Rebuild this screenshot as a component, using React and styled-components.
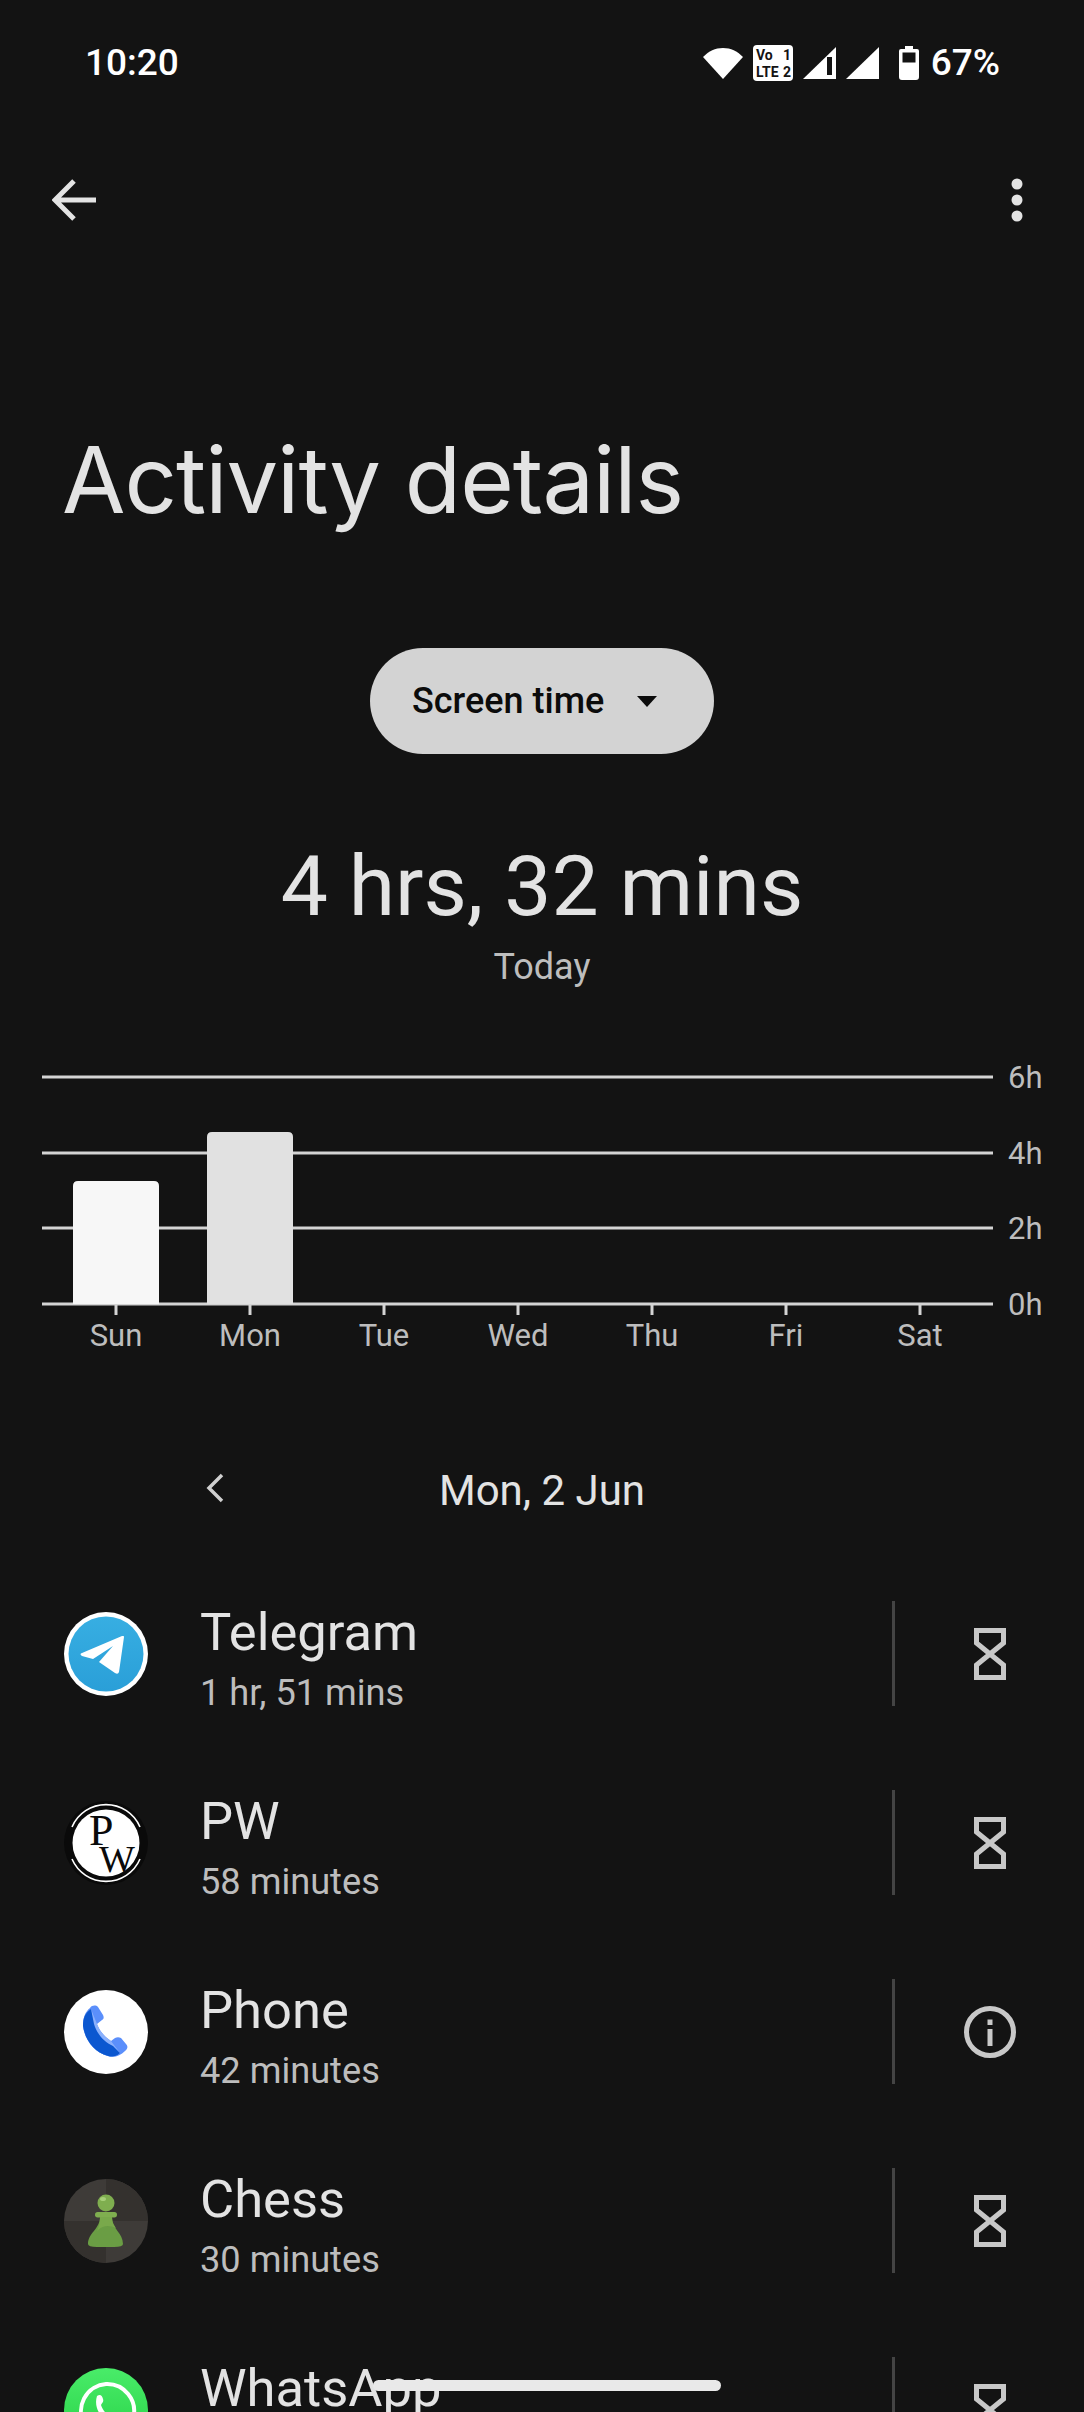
import React from 'react';
import styled, { createGlobalStyle } from 'styled-components';

const Global = createGlobalStyle`
  html, body { margin: 0; padding: 0; background: #131313; }
  * { box-sizing: border-box; }
`;

const Page = styled.div`
  width: 1084px;
  height: 2412px;
  overflow: hidden;
  position: relative;
  background: #131313;
  font-family: Roboto, "Liberation Sans", sans-serif;
  color: #e3e3e3;
  display: flex;
  flex-direction: column;
`;
const StatusBar = styled.div`
  height: 124px;
  flex: none;
  padding: 1px 84px 0 85px;
  display: flex;
  align-items: center;
  justify-content: space-between;
  color: #fff;
`;
const Clock = styled.span`
  font-size: 37px;
  font-weight: 500;
`;
const StatusIcons = styled.div`
  display: flex;
  align-items: center;
  gap: 10px;
`;
const BatterySlot = styled.svg`
  margin-left: 10px;
`;
const Pct = styled.span`
  font-size: 37px;
  font-weight: 500;
  margin-left: 2px;
`;
const Toolbar = styled.div`
  height: 152px;
  flex: none;
  padding: 0 61px 0 52px;
  display: flex;
  align-items: center;
  justify-content: space-between;
`;
const Title = styled.h1`
  margin: 0;
  height: 372px;
  flex: none;
  padding: 144px 0 0 62px;
  font-family: Inter, sans-serif;
  font-weight: 400;
  font-size: 92px;
  line-height: 120px;
  letter-spacing: -1px;
  color: #e3e3e3;
`;
const PillRow = styled.div`
  display: flex;
  justify-content: center;
  flex: none;
`;
const Pill = styled.div`
  width: 344px;
  height: 106px;
  border-radius: 53px;
  background: #d3d3d3;
  color: #0b0b0b;
  display: flex;
  align-items: center;
  padding-left: 42px;
  gap: 33px;
  font-size: 36px;
  font-weight: 500;
`;
const Total = styled.div`
  margin-top: 84px;
  height: 98px;
  flex: none;
  text-align: center;
  font-size: 84px;
  line-height: 98px;
  color: #e3e3e3;
`;
const Today = styled.div`
  margin-top: 7px;
  flex: none;
  height: 48px;
  line-height: 48px;
  text-align: center;
  font-size: 36px;
  color: #bdbdbd;
`;
const Chart = styled.svg`
  display: block;
  flex: none;
  margin-top: 69px;
`;
const DateNav = styled.div`
  margin-top: 95px;
  height: 70px;
  flex: none;
  display: flex;
  align-items: center;
  justify-content: center;
  position: relative;
  font-size: 42px;
  color: #e3e3e3;
`;
const PrevButton = styled.svg`
  position: absolute;
  left: 204px;
  top: 17px;
`;
const List = styled.div`
  margin-top: 34px;
  flex: none;
  display: flex;
  flex-direction: column;
`;
const Row = styled.div`
  height: 189px;
  flex: none;
  display: flex;
  align-items: center;
  padding-left: 64px;
`;
const AppIcon = styled.svg`
  display: block;
  flex: none;
  width: 84px;
  height: 84px;
`;
const Info = styled.div`
  margin-left: 52px;
  padding-top: 9px;
  flex: 1;
  display: flex;
  flex-direction: column;
`;
const AppName = styled.div`
  font-size: 52.5px;
  line-height: 60px;
  color: #e3e3e3;
`;
const AppTime = styled.div`
  font-size: 36.2px;
  line-height: 44px;
  margin-top: 9px;
  color: #bdbdbd;
`;
const Divider = styled.div`
  width: 3px;
  height: 105px;
  background: #444;
  flex: none;
`;
const Action = styled.div`
  width: 189px;
  flex: none;
  display: flex;
  justify-content: center;
  align-items: center;
`;
const HomeBar = styled.div`
  position: absolute;
  left: 373px;
  top: 2380px;
  width: 348px;
  height: 11px;
  border-radius: 6px;
  background: #e9e9e9;
`;

const Wifi = () => (
  <svg width="40" height="32" viewBox="0 0 40 32">
    <path d="M20 32 L0 10 C6 4 12 1 20 1 C28 1 34 4 40 10 Z" fill="#fff" />
  </svg>
);
const VoLte = () => (
  <svg width="40" height="36" viewBox="0 0 40 36">
    <rect width="40" height="36" rx="4" fill="#fff" />
    <g fill="#131313" fontFamily="Roboto, sans-serif" fontWeight="700" fontSize="14">
      <text x="3" y="15">Vo</text>
      <text x="30" y="15">1</text>
      <text x="3" y="32">LTE</text>
      <text x="30" y="32">2</text>
    </g>
  </svg>
);
const Signal = ({ slit }) => (
  <svg width="33" height="32" viewBox="0 0 33 32">
    <path d="M33 0 V32 H0 Z" fill="#fff" />
    {slit && <rect x="24" y="10" width="5" height="18" fill="#131313" />}
  </svg>
);
const Battery = () => (
  <BatterySlot width="20" height="34" viewBox="0 0 20 34">
    <path d="M6 0 H14 V3 H18 Q20 3 20 5 V31 Q20 34 17 34 H3 Q0 34 0 31 V5 Q0 3 2 3 H6 Z" fill="#fff" />
    <rect x="3.5" y="6.5" width="13" height="10" fill="#131313" />
  </BatterySlot>
);
const Back = () => (
  <svg width="44" height="42" viewBox="0 0 44 42">
    <path d="M44 21 H4 M22 2 L3 21 L22 40" fill="none" stroke="#e3e3e3" strokeWidth="5" />
  </svg>
);
const Dots = () => (
  <svg width="12" height="44" viewBox="0 0 12 44" fill="#e3e3e3">
    <circle cx="6" cy="6" r="5.5" />
    <circle cx="6" cy="22" r="5.5" />
    <circle cx="6" cy="38" r="5.5" />
  </svg>
);
const Caret = () => (
  <svg width="20" height="11" viewBox="0 0 20 11">
    <path d="M0 0 H20 L10 11 Z" fill="#0b0b0b" />
  </svg>
);
const Hourglass = () => (
  <svg width="32" height="52" viewBox="0 0 32 52">
    <path d="M2.5 2.5 H29.5 V15 L2.5 37 V49.5 H29.5 V37 L2.5 15 Z" fill="none" stroke="#c8c8c8" strokeWidth="5" />
  </svg>
);
const InfoIcon = () => (
  <svg width="52" height="52" viewBox="0 0 52 52">
    <circle cx="26" cy="26" r="23.5" fill="none" stroke="#c8c8c8" strokeWidth="5" />
    <rect x="23.5" y="13.5" width="5" height="5.5" fill="#c8c8c8" />
    <rect x="23.5" y="23" width="5" height="17" fill="#c8c8c8" />
  </svg>
);

const TelegramIcon = () => (
  <AppIcon viewBox="0 0 84 84">
    <defs>
      <linearGradient id="tg" x1="0" y1="0" x2="0" y2="1">
        <stop offset="0" stopColor="#37aee2" />
        <stop offset="1" stopColor="#2a9fd8" />
      </linearGradient>
    </defs>
    <circle cx="42" cy="42" r="42" fill="#fff" />
    <circle cx="42" cy="42" r="37.5" fill="url(#tg)" />
    <path d="M60 25 L55 60 Q54 63 51 61 L35 50 L49 34 L29 47 L18 44 Q15 42 18 41 L58 24 Q60.500 23.500 60 25 Z" fill="#fff" />
  </AppIcon>
);
const PwIcon = () => (
  <AppIcon viewBox="0 0 84 84">
    <circle cx="42" cy="42" r="42" fill="#0a0a0a" />
    <circle cx="42" cy="42" r="33.500" fill="#fff" />
    <path d="M8 26 A37 37 0 0 1 76 26 M8 58 A37 37 0 0 0 76 58" fill="none" stroke="#fff" strokeWidth="1.600" />
    <g fill="#0a0a0a" fontFamily="'Liberation Serif', serif">
      <text x="25" y="44" fontSize="44">P</text>
      <text x="35" y="71" fontSize="38">W</text>
    </g>
  </AppIcon>
);
const PhoneIcon = () => (
  <AppIcon viewBox="0 0 84 84">
    <circle cx="42" cy="42" r="42" fill="#fff" />
    <path d="M26 18 C28 15 32 15 34 17 L39 25 C40 27 40 29 38 30 L33 34 C36 42 41 47 47 51 L51 48 C53 47 55 47 57 48 L62 54 C64 56 64 59 61 61 C56 66 50 68 44 66 C30 62 21 50 19 36 C19 28 21 22 26 18 Z" fill="#5b8ffb" />
    <path d="M27 19 L33 34 C36 42 41 47 47 51 L56 63 C52 67 48 67 44 66 C30 62 21 50 19 36 C19 28 21 23 27 19 Z" fill="#8ab0fc" />
    <path d="M27 19 L30 34 C33 44 40 52 49 56 L56 63 C52 67 48 67 44 66 C30 62 21 50 19 36 C19 28 21 23 27 19 Z" fill="#0b57d0" />
  </AppIcon>
);
const ChessIcon = () => (
  <AppIcon viewBox="0 0 84 84">
    <circle cx="42" cy="42" r="42" fill="#3e3b38" />
    <path d="M42 0 A42 42 0 0 1 84 42 H42 Z M42 42 V84 A42 42 0 0 1 0 42 Z" fill="#34312e" />
    <circle cx="42" cy="24" r="8.500" fill="#7fae4f" />
    <rect x="31" y="33" width="22" height="5.500" rx="2.700" fill="#7fae4f" />
    <path d="M36 38 H48 C48 50 59 54 59 65 Q59 68 50 68 H33 Q24 68 24 65 C24 54 36 50 36 38 Z" fill="#6a9d44" />
    <path d="M36 38 H48 C48 44 50 46 52 49 C46 46 38 46 33 52 C35 47 36 44 36 38 Z" fill="#79a94b" />
    <ellipse cx="39" cy="20" rx="3" ry="2" fill="#a6cf78" />
  </AppIcon>
);
const WhatsAppIcon = () => (
  <AppIcon viewBox="0 0 84 84">
    <defs>
      <linearGradient id="wa" x1="0" y1="0" x2="0" y2="1">
        <stop offset="0" stopColor="#49ec69" />
        <stop offset="1" stopColor="#25cf43" />
      </linearGradient>
    </defs>
    <circle cx="42" cy="42" r="42" fill="url(#wa)" />
    <path d="M42 16 A27 27 0 1 1 29 66 L18 69 L21 57 A27 27 0 0 1 42 16 Z" fill="none" stroke="#fff" strokeWidth="4" />
    <path d="M33 28 C36 26 38 27 39 31 C40 34 38 35 37 37 C39 43 43 47 49 50 C52 47 54 47 57 49 C60 51 59 54 56 56 C44 58 28 44 33 28 Z" fill="#fff" />
  </AppIcon>
);

const days = ['Sun', 'Mon', 'Tue', 'Wed', 'Thu', 'Fri', 'Sat'];
const gridlines = [
  { label: '6h', y: 17 },
  { label: '4h', y: 93 },
  { label: '2h', y: 168 },
  { label: '0h', y: 244 },
];
const bars = [
  { x: 73, top: 121, fill: '#f7f7f7' },
  { x: 207, top: 72, fill: '#e1e1e1' },
];

const UsageChart = () => (
  <Chart width="1084" height="300" viewBox="0 0 1084 300">
    {gridlines.map((g) => (
      <g key={g.label}>
        <rect x="42" y={g.y - 1.5} width="951" height="3" fill="#d4d4d4" />
        <text x="1008" y={g.y + 11} fontSize="31" fill="#bdbdbd" fontFamily="Roboto, sans-serif">{g.label}</text>
      </g>
    ))}
    {bars.map((b) => (
      <path key={b.x} d={`M${b.x} 244 V${b.top + 5} Q${b.x} ${b.top} ${b.x + 5} ${b.top} H${b.x + 81} Q${b.x + 86} ${b.top} ${b.x + 86} ${b.top + 5} V244 Z`} fill={b.fill} />
    ))}
    {days.map((d, i) => {
      const x = 116 + i * 134;
      return (
        <g key={d}>
          <rect x={x - 1.5} y="244" width="3" height="11" fill="#d4d4d4" />
          <text x={x} y="286" fontSize="31" textAnchor="middle" fill="#bdbdbd" fontFamily="Roboto, sans-serif">{d}</text>
        </g>
      );
    })}
  </Chart>
);

const apps = [
  { name: 'Telegram', time: '1 hr, 51 mins', Icon: TelegramIcon, Act: Hourglass },
  { name: 'PW', time: '58 minutes', Icon: PwIcon, Act: Hourglass },
  { name: 'Phone', time: '42 minutes', Icon: PhoneIcon, Act: InfoIcon },
  { name: 'Chess', time: '30 minutes', Icon: ChessIcon, Act: Hourglass },
  { name: 'WhatsApp', time: '25 minutes', Icon: WhatsAppIcon, Act: Hourglass },
];

export default function App() {
  return (
    <Page>
      <Global />
      <StatusBar>
        <Clock>10:20</Clock>
        <StatusIcons>
          <Wifi />
          <VoLte />
          <Signal slit />
          <Signal />
          <Battery />
          <Pct>67%</Pct>
        </StatusIcons>
      </StatusBar>
      <Toolbar>
        <Back />
        <Dots />
      </Toolbar>
      <Title>Activity details</Title>
      <PillRow>
        <Pill>
          <span>Screen time</span>
          <Caret />
        </Pill>
      </PillRow>
      <Total>4 hrs, 32 mins</Total>
      <Today>Today</Today>
      <UsageChart />
      <DateNav>
        <PrevButton width="22" height="32" viewBox="0 0 22 32">
          <path d="M18 3 L5 16 L18 29" fill="none" stroke="#d0d0d0" strokeWidth="3.500" />
        </PrevButton>
        Mon, 2 Jun
      </DateNav>
      <List>
        {apps.map(({ name, time, Icon, Act }) => (
          <Row key={name}>
            <Icon />
            <Info>
              <AppName>{name}</AppName>
              <AppTime>{time}</AppTime>
            </Info>
            <Divider />
            <Action><Act /></Action>
          </Row>
        ))}
      </List>
      <HomeBar />
    </Page>
  );
}
